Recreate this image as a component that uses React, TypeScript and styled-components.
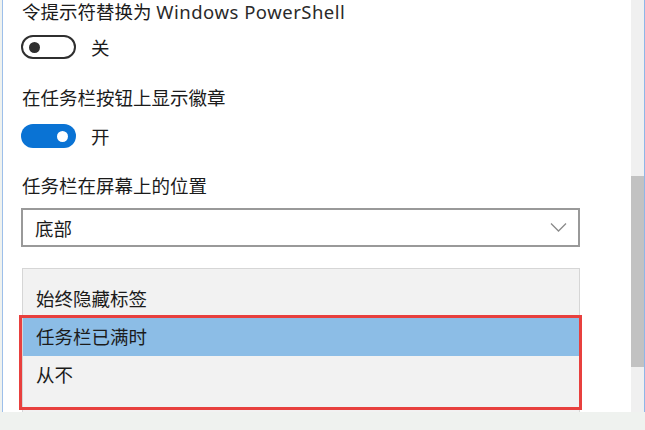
import React, { FC } from 'react'
import styled, { createGlobalStyle } from 'styled-components'

const GlobalStyle = createGlobalStyle`
	html, body {
		margin: 0;
		padding: 0;
		background: #ffffff;
	}
	body {
		font-family: "Segoe UI", "Noto Sans", "Noto Sans CJK SC", sans-serif;
		color: #1b1b1b;
	}
`

const Page = styled.div`
	width: 645px;
	height: 430px;
	display: flex;
	flex-direction: column;
	overflow: hidden;
	background: #eff2ef;
`

const Frame = styled.div`
	height: 412px;
	margin-left: 2px;
	display: flex;
	border-left: 1px solid #9dbfea;
	border-right: 1px solid #8fb6e8;
	background: #ffffff;
`

const Content = styled.div`
	flex: 1;
	padding-left: 18px;
	display: flex;
	flex-direction: column;
	font-size: 18.5px;
`

const Label = styled.div<{ $gap: number }>`
	height: 22px;
	line-height: 22px;
	margin-top: ${(p) => p.$gap}px;
	padding-left: 1px;
	white-space: nowrap;
`

const Latin = styled.span`
	letter-spacing: 0.5px;
	color: #2a2a2a;
`

const ToggleRow = styled.div<{ $gap: number }>`
	display: flex;
	align-items: center;
	gap: 15px;
	margin-top: ${(p) => p.$gap}px;
	height: 24px;
`

const Track = styled.div<{ $on: boolean }>`
	box-sizing: border-box;
	width: 55px;
	height: 24px;
	border-radius: 12px;
	display: flex;
	align-items: center;
	justify-content: ${(p) => (p.$on ? 'flex-end' : 'flex-start')};
	padding: 0 8px;
	background: ${(p) => (p.$on ? '#0a73d4' : '#ffffff')};
	border: ${(p) => (p.$on ? 'none' : '2.5px solid #2f2f2f')};
	padding-left: ${(p) => (p.$on ? '8px' : '5.5px')};
`

const Knob = styled.div<{ $on: boolean }>`
	width: 11px;
	height: 11px;
	border-radius: 50%;
	background: ${(p) => (p.$on ? '#ffffff' : '#2f2f2f')};
`

const Select = styled.div`
	box-sizing: border-box;
	margin-top: 11px;
	width: 559px;
	height: 39px;
	border: 2px solid #999999;
	display: flex;
	align-items: center;
	justify-content: space-between;
	padding: 0 11px 0 12px;
`

const Popup = styled.div`
	position: relative;
	box-sizing: border-box;
	margin-top: 21px;
	width: 558px;
	margin-left: 1px;
	height: 144px;
	background: #f2f2f2;
	border: 1px solid #d6d6d6;
	border-bottom: none;
	padding-top: 11px;
`

const Option = styled.div<{ $active?: boolean }>`
	height: 38px;
	line-height: 38px;
	padding-left: 13px;
	background: ${(p) => (p.$active ? '#8cbde6' : 'transparent')};
`

const Highlight = styled.div`
	position: absolute;
	left: -4px;
	right: -3px;
	top: 46px;
	height: 95px;
	box-sizing: border-box;
	border: 3px solid #e8403e;
`

const ScrollTrack = styled.div`
	width: 13px;
	background: #f0f0f0;
	padding-top: 176px;
	box-sizing: border-box;
`

const Thumb = styled.div`
	height: 191px;
	background: #c2c2c2;
`

const Chevron: FC = () => (
	<svg width="17" height="11" viewBox="0 0 17 11">
		<polyline points="1,1.5 8.5,9 16,1.5" fill="none" stroke="#8a8a8a" strokeWidth="1.3" />
	</svg>
)

const Toggle: FC<{ on: boolean; label: string; gap: number }> = ({ on, label, gap }) => (
	<ToggleRow $gap={gap}>
		<Track $on={on}>
			<Knob $on={on} />
		</Track>
		<span>{label}</span>
	</ToggleRow>
)

const App: FC = () => (
	<Page>
		<GlobalStyle />
		<Frame>
			<Content>
				<Label $gap={1}>
					令提示符替换为 <Latin>Windows PowerShell</Latin>
				</Label>
				<Toggle on={false} label="关" gap={12} />
				<Label $gap={28}>在任务栏按钮上显示徽章</Label>
				<Toggle on label="开" gap={15} />
				<Label $gap={27}>任务栏在屏幕上的位置</Label>
				<Select>
					<span>底部</span>
					<Chevron />
				</Select>
				<Popup>
					<Option>始终隐藏标签</Option>
					<Option $active>任务栏已满时</Option>
					<Option>从不</Option>
					<Highlight />
				</Popup>
			</Content>
			<ScrollTrack>
				<Thumb />
			</ScrollTrack>
		</Frame>
	</Page>
)

export default App
